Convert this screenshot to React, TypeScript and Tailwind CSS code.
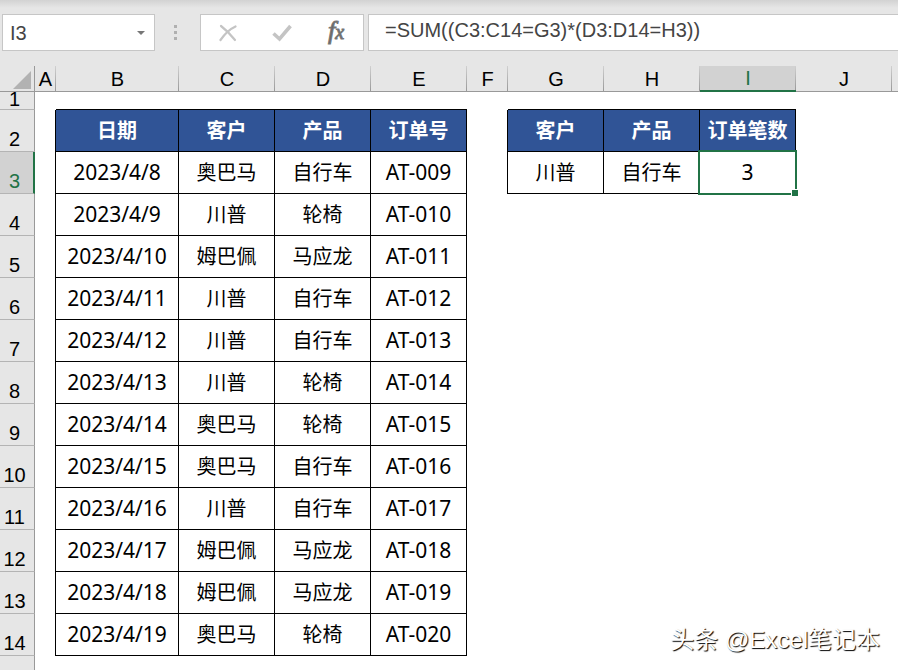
import clsx from 'clsx';

const COLUMNS = [
  { name: 'A', width: 'w-[21px]' },
  { name: 'B', width: 'w-[123px]' },
  { name: 'C', width: 'w-24' },
  { name: 'D', width: 'w-24' },
  { name: 'E', width: 'w-24' },
  { name: 'F', width: 'w-[41px]' },
  { name: 'G', width: 'w-24' },
  { name: 'H', width: 'w-24' },
  { name: 'I', width: 'w-24' },
  { name: 'J', width: 'w-24' },
];

const ORDERS = [
  ['2023/4/8', '奥巴马', '自行车', 'AT-009'],
  ['2023/4/9', '川普', '轮椅', 'AT-010'],
  ['2023/4/10', '姆巴佩', '马应龙', 'AT-011'],
  ['2023/4/11', '川普', '自行车', 'AT-012'],
  ['2023/4/12', '川普', '自行车', 'AT-013'],
  ['2023/4/13', '川普', '轮椅', 'AT-014'],
  ['2023/4/14', '奥巴马', '轮椅', 'AT-015'],
  ['2023/4/15', '奥巴马', '自行车', 'AT-016'],
  ['2023/4/16', '川普', '自行车', 'AT-017'],
  ['2023/4/17', '姆巴佩', '马应龙', 'AT-018'],
  ['2023/4/18', '姆巴佩', '马应龙', 'AT-019'],
  ['2023/4/19', '奥巴马', '轮椅', 'AT-020'],
];

// cell values keyed by address, e.g. B2
const cells: Record<string, string> = {
  B2: '日期', C2: '客户', D2: '产品', E2: '订单号',
  G2: '客户', H2: '产品', I2: '订单笔数',
  G3: '川普', H3: '自行车', I3: '3',
};
ORDERS.forEach((order, i) => {
  order.forEach((value, j) => {
    cells['BCDE'[j] + (i + 3)] = value;
  });
});

const ROWS = Array.from({ length: 14 }, (_, i) => i + 1);
const SELECTED = { col: 'I', row: 3 };

function has(colIndex: number, row: number) {
  const col = COLUMNS[colIndex];
  return !!col && cells[col.name + row] !== undefined;
}

function FormulaBar() {
  return (
    <div className="flex h-[66px] shrink-0 bg-[linear-gradient(#d2d2d2,#e6e6e6_8px)] pt-[14px] pb-[15px] pl-[2px] text-[20px] text-[#444]">
      <div className="flex w-[153px] shrink-0 border border-[#c6c6c6] bg-white">
        <input aria-label="Name box" defaultValue="I3" className="min-w-0 flex-1 pl-[7px] outline-none" />
        <button type="button" aria-label="Show names" className="flex w-[26px] items-center justify-center">
          <svg width="8" height="4" viewBox="0 0 8 4" fill="#777"><path d="M0 0h8L4 4z" /></svg>
        </button>
      </div>
      <div className="flex w-[45px] shrink-0 items-center justify-center pr-1">
        <svg width="3" height="15" viewBox="0 0 3 15" fill="#b0b0b0">
          <path d="M0 0h3v3H0zM0 6h3v3H0zM0 12h3v3H0z" />
        </svg>
      </div>
      <div className="flex w-[164px] shrink-0 items-center border border-[#c6c6c6] bg-white">
        <button type="button" aria-label="Cancel" className="flex flex-1 justify-center">
          <svg width="18" height="18" viewBox="0 0 18 18" fill="none" stroke="#c4c4c4" strokeLinecap="round">
            <path d="M2 2C6 5 12 11 16 16" strokeWidth="2.2" />
            <path d="M16.5 2.5C11 5 5 11 1.5 16" strokeWidth="2.2" />
          </svg>
        </button>
        <button type="button" aria-label="Enter" className="flex flex-1 justify-center">
          <svg width="20" height="18" viewBox="0 0 20 18" fill="none" stroke="#c4c4c4" strokeWidth="3.6">
            <path d="M1.5 9.5L7.5 15L18.5 2" />
          </svg>
        </button>
        <button
          type="button"
          aria-label="Insert function"
          className="flex-1 pb-[2px] font-['Liberation_Serif',serif] text-[26px] leading-6 text-[#666] italic [-webkit-text-stroke:1px_#777]"
        >
          f<span className="text-[20px]">x</span>
        </button>
      </div>
      <input
        aria-label="Formula bar"
        defaultValue="=SUM((C3:C14=G3)*(D3:D14=H3))"
        className="ml-1 min-w-0 flex-1 border-y border-l border-[#c6c6c6] bg-white pb-[6px] pl-4 outline-none"
      />
    </div>
  );
}

function ColumnHead({ name }: { name: string }) {
  const selected = name === SELECTED.col;
  return (
    <th
      scope="col"
      className={clsx(
        'h-[26px] bg-[linear-gradient(#d0d0d0,#999)] bg-[length:1px_100%] bg-right bg-no-repeat p-0 text-center font-normal',
        selected
          ? 'border-b-2 border-[#217346] bg-[#d2d2d2] pt-px leading-[23px] text-[#217346]'
          : 'border-b border-[#999] bg-[#e6e6e6] leading-6',
      )}
    >
      {name}
    </th>
  );
}

function Cell({ colIndex, row }: { colIndex: number; row: number }) {
  const col = COLUMNS[colIndex];
  const value = cells[col.name + row];
  const filled = value !== undefined;
  const selected = col.name === SELECTED.col && row === SELECTED.row;

  return (
    <td
      className={clsx(
        'border-black px-0 pt-0 text-center',
        (filled || has(colIndex + 1, row)) && 'border-r',
        (filled || has(colIndex, row + 1)) && 'border-b',
        filled && row === 2 && 'bg-[#305496] font-bold text-white',
        filled && /^[0-9A-Z]/.test(value) ? 'pb-[2px] text-[21px]' : 'pb-0 text-[20px]',
        selected && 'relative',
      )}
    >
      {value}
      {selected && (
        <>
          <span className="absolute -top-[2px] -right-[2px] -bottom-[2px] -left-[2px] border-2 border-[#217346]" />
          <span className="absolute -right-1 -bottom-1 size-2 border border-white bg-[#217346]" />
        </>
      )}
    </td>
  );
}

function Sheet() {
  return (
    <table className="w-full table-fixed border-separate border-spacing-0 text-[20px] text-black">
      <colgroup>
        <col className="w-[35px]" />
        {COLUMNS.map(c => <col key={c.name} className={c.width} />)}
        <col />
      </colgroup>
      <thead>
        <tr>
          <th className="border-r border-b border-[#999] bg-[#e6e6e6] p-0">
            <svg width="18" height="18" viewBox="0 0 18 18" fill="#b2b2b2" className="mt-[2px] mr-[3px] ml-auto">
              <path d="M18 0v18H0z" />
            </svg>
          </th>
          {COLUMNS.map(c => <ColumnHead key={c.name} name={c.name} />)}
          <th className="border-b border-[#999] bg-[#e6e6e6]" />
        </tr>
      </thead>
      <tbody className="font-['Noto_Sans','Noto_Sans_CJK_SC',sans-serif] leading-6">
        {ROWS.map(row => (
          <tr key={row} className={row === 1 ? 'h-[18px]' : 'h-[42px]'}>
            <th
              scope="row"
              className={clsx(
                "border-b border-b-[#b4b4b4] px-0 pt-0 text-center align-bottom font-['Liberation_Sans',Arial,sans-serif] font-normal",
                row === 1 ? 'pb-[3px] leading-[14px]' : 'pb-px leading-[22px]',
                row === SELECTED.row
                  ? 'border-r-2 border-r-[#217346] bg-[#d2d2d2] pr-1 text-[#217346]'
                  : 'border-r border-r-[#999] bg-[#e6e6e6] pr-[5px]',
              )}
            >
              {row}
            </th>
            {COLUMNS.map((c, i) => <Cell key={c.name} colIndex={i} row={row} />)}
            <td />
          </tr>
        ))}
        <tr className="h-[42px]">
          <th className="border-r border-b border-[#999] bg-[#e6e6e6]" />
          <td colSpan={COLUMNS.length + 1} />
        </tr>
      </tbody>
    </table>
  );
}

export default function App() {
  return (
    <div className="relative flex h-screen flex-col overflow-hidden bg-white font-['Liberation_Sans',Arial,'Noto_Sans_CJK_SC',sans-serif]">
      <FormulaBar />
      <div className="min-h-0 flex-1 overflow-hidden">
        <Sheet />
      </div>
      <div className="absolute right-[18px] bottom-[14px] text-[24px] leading-8 text-white [text-shadow:1px_1px_1px_#000]">
        头条 @Excel笔记本
      </div>
    </div>
  );
}
